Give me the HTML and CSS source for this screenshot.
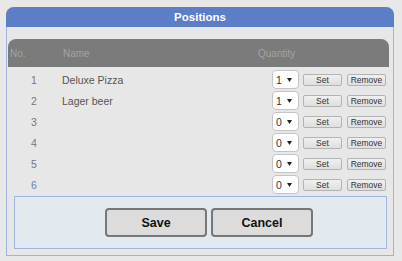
FILE: index.html
```html
<!DOCTYPE html>
<html>
<head>
<meta charset="utf-8">
<link rel="stylesheet" href="styles.css">
</head>
<body>
<div class="panel">
  <div class="panel-title">Positions</div>
  <div class="table">
    <div class="thead">
      <span class="th-no">No.</span>
      <span class="th-name">Name</span>
      <span class="th-qty">Quantity</span>
    </div>
    <div class="row"><span class="no">1</span><span class="name">Deluxe Pizza</span><div class="actions"><div class="sel"><span>1</span><svg width="5" height="4" viewBox="0 0 5 4"><path d="M0 0H5L2.5 4Z" fill="#222"/></svg></div><button class="btn-s set">Set</button><button class="btn-s rem">Remove</button></div></div>
    <div class="row"><span class="no">2</span><span class="name">Lager beer</span><div class="actions"><div class="sel"><span>1</span><svg width="5" height="4" viewBox="0 0 5 4"><path d="M0 0H5L2.5 4Z" fill="#222"/></svg></div><button class="btn-s set">Set</button><button class="btn-s rem">Remove</button></div></div>
    <div class="row"><span class="no">3</span><span class="name"></span><div class="actions"><div class="sel"><span>0</span><svg width="5" height="4" viewBox="0 0 5 4"><path d="M0 0H5L2.5 4Z" fill="#222"/></svg></div><button class="btn-s set">Set</button><button class="btn-s rem">Remove</button></div></div>
    <div class="row"><span class="no">4</span><span class="name"></span><div class="actions"><div class="sel"><span>0</span><svg width="5" height="4" viewBox="0 0 5 4"><path d="M0 0H5L2.5 4Z" fill="#222"/></svg></div><button class="btn-s set">Set</button><button class="btn-s rem">Remove</button></div></div>
    <div class="row"><span class="no">5</span><span class="name"></span><div class="actions"><div class="sel"><span>0</span><svg width="5" height="4" viewBox="0 0 5 4"><path d="M0 0H5L2.5 4Z" fill="#222"/></svg></div><button class="btn-s set">Set</button><button class="btn-s rem">Remove</button></div></div>
    <div class="row"><span class="no blue">6</span><span class="name"></span><div class="actions"><div class="sel"><span>0</span><svg width="5" height="4" viewBox="0 0 5 4"><path d="M0 0H5L2.5 4Z" fill="#222"/></svg></div><button class="btn-s set">Set</button><button class="btn-s rem">Remove</button></div></div>
  </div>
  <div class="footer">
    <button class="btn-l">Save</button>
    <button class="btn-l">Cancel</button>
  </div>
</div>
</body>
</html>
```
FILE: styles.css
```css
html, body {
  margin: 0;
  padding: 0;
  background: #e8e8e8;
  font-family: "Liberation Sans", Arial, sans-serif;
}
body {
  padding: 7px 0 0 6px;
}
.panel {
  width: 386px;
  height: 248px;
  border: 1px solid #9db3df;
  border-top: none;
  border-radius: 8px 8px 0 0;
  background: #e7e7e7;
  display: flex;
  flex-direction: column;
}
.panel-title {
  height: 20px;
  margin: 0 -1px;
  background: #5b7ec6;
  border-radius: 8px 8px 0 0;
  color: #fff;
  font-weight: bold;
  font-size: 11.5px;
  line-height: 21px;
  text-align: center;
}
.table {
  margin: 12px 4px 0 1px;
}
.thead {
  height: 28px;
  background: #7b7b7b;
  border-radius: 8px 8px 0 0;
  display: flex;
  align-items: center;
  color: #a3a3a3;
  font-size: 10px;
}
.th-no {
  width: 53px;
  padding-left: 2px;
}
.th-name {
  width: 195px;
}
.row {
  height: 21px;
  display: flex;
  align-items: center;
  font-size: 10.5px;
  color: #555;
}
.thead + .row {
  margin-top: 2px;
}
.no {
  width: 52px;
  text-align: center;
  color: #777;
}
.no.blue {
  color: #6a82aa;
}
.name {
  flex: 1;
  padding-left: 2px;
}
.actions {
  display: flex;
  align-items: center;
  padding-right: 3px;
}
.sel {
  background: #fff;
  border: 1px solid #c4c4c4;
  border-radius: 4px;
  display: flex;
  align-items: center;
  justify-content: space-between;
  padding: 0 6px 0 3px;
  box-sizing: border-box;
  width: 27px;
  height: 19px;
  font-size: 10.5px;
  color: #333;
}
.btn-s {
  height: 12px;
  width: 39px;
  padding: 0;
  margin: 0;
  border: 1px solid #b3b3b3;
  border-radius: 2px;
  background: linear-gradient(#f0f0f0, #dedede);
  font-family: "Liberation Sans", Arial, sans-serif;
  font-size: 8.5px;
  line-height: 10px;
  color: #333;
}
.set {
  margin-left: 4px;
}
.rem {
  margin-left: 5px;
}
.footer {
  margin: 1px 6px 0 7px;
  height: 51px;
  border: 1px solid #a2b5de;
  background: #e2e9ef;
  display: flex;
  align-items: center;
  justify-content: center;
  gap: 4px;
  padding-left: 17px;
}
.btn-l {
  width: 102px;
  height: 29px;
  margin: 0;
  padding: 0;
  border: 2px solid #777;
  border-radius: 4px;
  background: #dcdcdc;
  font-family: "Liberation Sans", Arial, sans-serif;
  font-weight: bold;
  font-size: 12.5px;
  color: #111;
}
```
